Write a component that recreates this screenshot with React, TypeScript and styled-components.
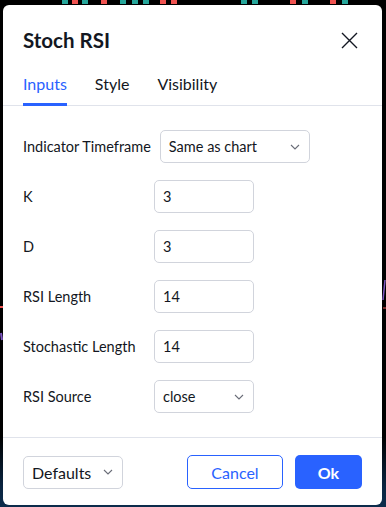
import styled, { createGlobalStyle } from 'styled-components';

const GlobalStyle = createGlobalStyle`
  html, body {
    margin: 0;
    padding: 0;
    background: #000;
  }
  * {
    box-sizing: border-box;
  }
`;

const candles = [
  { x: 62, c: '#26a69a' }, { x: 72, c: '#ef5350' }, { x: 82, c: '#26a69a' },
  { x: 101, c: '#ef5350' }, { x: 120, c: '#26a69a' }, { x: 132, c: '#26a69a' },
  { x: 143, c: '#26a69a' }, { x: 160, c: '#ef5350' }, { x: 171, c: '#ef5350' },
  { x: 241, c: '#26a69a' }, { x: 252, c: '#26a69a' }, { x: 290, c: '#ef5350' },
  { x: 302, c: '#26a69a' }, { x: 330, c: '#ef5350' }, { x: 342, c: '#26a69a' },
];

function Chart() {
  return (
    <ChartLayer width='386' height='507' viewBox='0 0 386 507'>
      {candles.map((k, i) => (
        <rect key={i} x={k.x} y={0} width={6} height={4} fill={k.c} />
      ))}
      <line x1='1' y1='333' x2='2' y2='340' stroke='#7e57c2' strokeWidth='2' />
      <line x1='0' y1='307' x2='3' y2='307' stroke='#ef5350' strokeWidth='2' />
      <line x1='383' y1='308' x2='386' y2='308' stroke='#ef5350' strokeWidth='1' />
      <line x1='383' y1='300' x2='385' y2='280' stroke='#7e57c2' strokeWidth='1.5' />
    </ChartLayer>
  );
}

function Chevron() {
  return (
    <svg width='10' height='6' viewBox='0 0 10 6' fill='none'>
      <path d='M1 1l4 4 4-4' stroke='#6a6d78' strokeWidth='1.1' />
    </svg>
  );
}

type Row = { label: string; value: string; select?: boolean };

const rows: Row[] = [
  { label: 'K', value: '3' },
  { label: 'D', value: '3' },
  { label: 'RSI Length', value: '14' },
  { label: 'Stochastic Length', value: '14' },
  { label: 'RSI Source', value: 'close', select: true },
];

export default function App() {
  return (
    <>
      <GlobalStyle />
      <Page>
        <Chart />
        <Dialog>
          <Header>
            <Title>Stoch RSI</Title>
            <CloseButton aria-label='close'>
              <svg width='17' height='17' viewBox='0 0 17 17' fill='none'>
                <path d='M1 1l15 15M16 1L1 16' stroke='#131722' strokeWidth='1.4' />
              </svg>
            </CloseButton>
          </Header>
          <Tabs>
            <Tab $active>Inputs</Tab>
            <Tab>Style</Tab>
            <Tab>Visibility</Tab>
          </Tabs>
          <Body>
            <FirstRow>
              <Label>Indicator Timeframe</Label>
              <Select $width={150}>
                <span>Same as chart</span>
                <Chevron />
              </Select>
            </FirstRow>
            {rows.map((r) => (
              <FieldRow key={r.label}>
                <Label>{r.label}</Label>
                {r.select ? (
                  <Select $width={100}>
                    <span>{r.value}</span>
                    <Chevron />
                  </Select>
                ) : (
                  <Input>{r.value}</Input>
                )}
              </FieldRow>
            ))}
          </Body>
          <Footer>
            <Select $width={100} $size={16}>
              <span>Defaults</span>
              <Chevron />
            </Select>
            <Buttons>
              <CancelButton>Cancel</CancelButton>
              <OkButton>Ok</OkButton>
            </Buttons>
          </Footer>
        </Dialog>
      </Page>
    </>
  );
}

const Page = styled.div`
  position: relative;
  width: 386px;
  height: 507px;
  padding: 5px 4px 2px 3px;
  background: linear-gradient(to bottom, #000 0%, #000 86%, #0a2440 96%, #0c2c4c 100%);
  font-family: Lato, 'Noto Sans', sans-serif;
  color: #131722;
`;

const ChartLayer = styled.svg`
  position: absolute;
  left: 0;
  top: 0;
`;

const Dialog = styled.div`
  position: relative;
  width: 379px;
  height: 500px;
  background: #fff;
  border-radius: 6px;
  display: flex;
  flex-direction: column;
`;

const Header = styled.div`
  display: flex;
  align-items: center;
  justify-content: space-between;
  padding: 20px 24px 0 20px;
  height: 50px;
`;

const Title = styled.div`
  font-size: 20.5px;
  font-weight: 700;
  line-height: 30px;
`;

const CloseButton = styled.div`
  display: flex;
  align-items: center;
  justify-content: center;
  width: 17px;
  height: 17px;
`;

const Tabs = styled.div`
  display: flex;
  gap: 28px;
  margin-top: 7px;
  padding: 0 20px;
  height: 45px;
  border-bottom: 1px solid #e0e3eb;
`;

const Tab = styled.div<{ $active?: boolean }>`
  display: flex;
  align-items: center;
  height: 44px;
  padding-top: 1px;
  font-size: 16px;
  color: ${(p) => (p.$active ? '#2962ff' : '#131722')};
  border-bottom: 3px solid ${(p) => (p.$active ? '#2962ff' : 'transparent')};
  margin-bottom: -1px;
`;

const Body = styled.div`
  display: flex;
  flex-direction: column;
  gap: 17px;
  padding: 24px 20px 24px;
  border-bottom: 1px solid #e0e3eb;
`;

const FirstRow = styled.div`
  display: flex;
  align-items: center;
  gap: 9px;
  height: 33px;
`;

const FieldRow = styled.div`
  display: grid;
  grid-template-columns: 131px 100px;
  align-items: center;
  height: 33px;
`;

const Label = styled.div`
  font-size: 14.5px;
  white-space: nowrap;
`;

const Input = styled.div`
  height: 33px;
  border: 1px solid #d1d4dc;
  border-radius: 5px;
  padding: 0 8px;
  display: flex;
  align-items: center;
  font-size: 14.5px;
`;

const Select = styled.div<{ $width: number; $size?: number }>`
  width: ${(p) => p.$width}px;
  height: 33px;
  border: 1px solid #d1d4dc;
  border-radius: 5px;
  padding: 0 9px 0 8px;
  display: flex;
  align-items: center;
  justify-content: space-between;
  font-size: ${(p) => p.$size ?? 14.5}px;
`;

const Footer = styled.div`
  display: flex;
  align-items: center;
  justify-content: space-between;
  margin-top: auto;
  padding: 17px 20px;
`;

const Buttons = styled.div`
  display: flex;
  gap: 12px;
`;

const CancelButton = styled.div`
  width: 96px;
  height: 34px;
  border: 1px solid #2962ff;
  border-radius: 5px;
  color: #2962ff;
  font-size: 16px;
  display: flex;
  align-items: center;
  justify-content: center;
`;

const OkButton = styled.div`
  width: 67px;
  height: 34px;
  border-radius: 5px;
  background: #2962ff;
  color: #fff;
  font-size: 16px;
  font-weight: 700;
  display: flex;
  align-items: center;
  justify-content: center;
`;
